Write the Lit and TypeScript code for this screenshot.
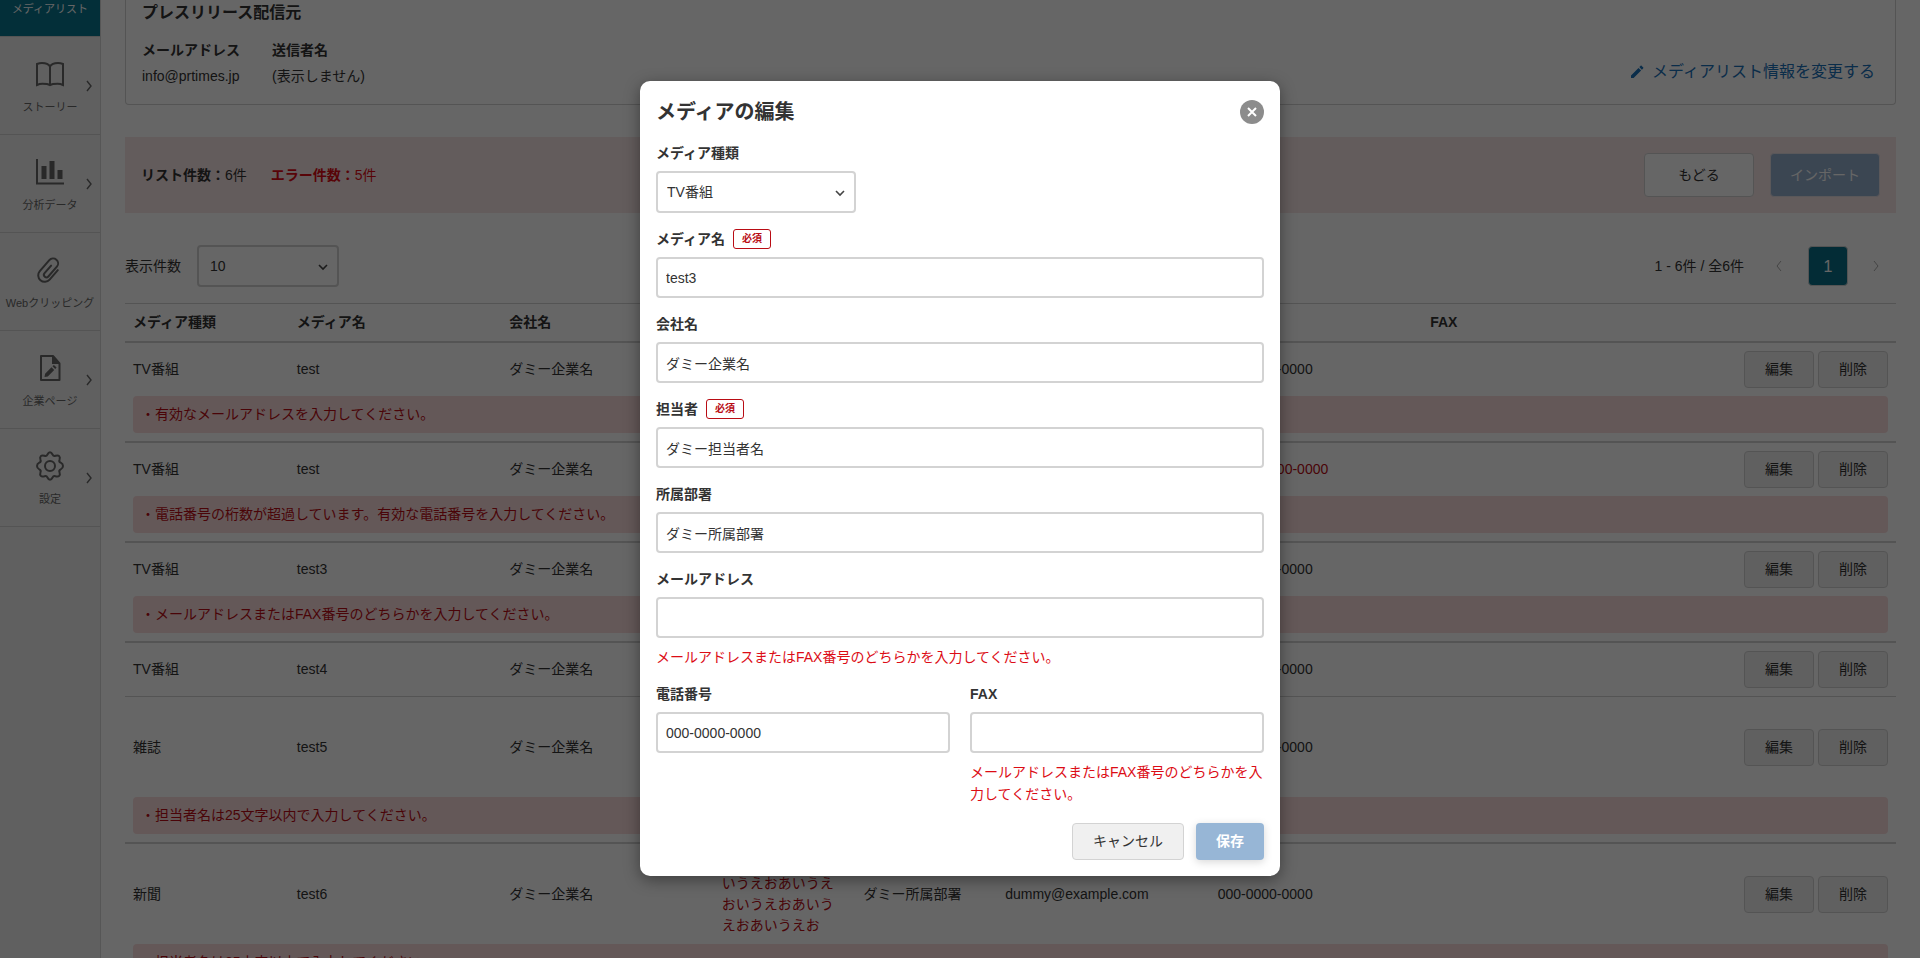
import { LitElement, html, css, svg, nothing } from "lit";
import { customElement } from "lit/decorators.js";

interface MediaRow {
  kind: string;
  name: string;
  company: string;
  person: string;
  longPerson?: boolean;
  dept: string;
  mail: string;
  tel: string;
  badTel?: boolean;
  error?: string;
}

const LONG_NAME = "えおあいうえおあいうえおあいうえおいうえおあいうえおあいうえお";

const ROWS: MediaRow[] = [
  { kind: "TV番組", name: "test", company: "ダミー企業名", person: "ダミー担当者", dept: "ダミー所属部署", mail: "dummy", tel: "000-0000-0000", error: "有効なメールアドレスを入力してください。" },
  { kind: "TV番組", name: "test", company: "ダミー企業名", person: "ダミー担当者", dept: "ダミー所属部署", mail: "dummy@example.com", tel: "00000-0000-0000", badTel: true, error: "電話番号の桁数が超過しています。有効な電話番号を入力してください。" },
  { kind: "TV番組", name: "test3", company: "ダミー企業名", person: "ダミー担当者", dept: "ダミー所属部署", mail: "", tel: "000-0000-0000", error: "メールアドレスまたはFAX番号のどちらかを入力してください。" },
  { kind: "TV番組", name: "test4", company: "ダミー企業名", person: "ダミー担当者", dept: "ダミー所属部署", mail: "dummy@example.com", tel: "000-0000-0000" },
  { kind: "雑誌", name: "test5", company: "ダミー企業名", person: LONG_NAME, longPerson: true, dept: "ダミー所属部署", mail: "dummy@example.com", tel: "000-0000-0000", error: "担当者名は25文字以内で入力してください。" },
  { kind: "新聞", name: "test6", company: "ダミー企業名", person: LONG_NAME, longPerson: true, dept: "ダミー所属部署", mail: "dummy@example.com", tel: "000-0000-0000", error: "担当者名は25文字以内で入力してください。" },
];

const HEADS = ["メディア種類", "メディア名", "会社名", "担当者", "所属部署", "メールアドレス", "電話番号", "FAX", ""];

const ICONS = {
  book: svg`<path d="M15 7.500C13.600 5 10.500 4 7 4 4.800 4 3 4.600 2 5v21c2-1 3.600-1.200 5.500-1.200 3.500 0 6 .4 7.500 1.200 1.500-.8 4-1.200 7.500-1.200 1.900 0 3.500.2 5.500 1.200V5c-1-.4-2.800-1-5-1-3.500 0-6.600 1-8 3.500zV26"/>`,
  chart: svg`<path d="M2 2v24.500h27"/><path class="solid" d="M6.500 9h5v13h-5zM14.500 4h5v18h-5zM22.500 13h5v9h-5z"/>`,
  clip: svg`<g transform="rotate(41 15 15)"><path d="M21 10v12.500a6.500 6.500 0 0 1-13 0V8a5 5 0 0 1 10 0v13a2.500 2.500 0 0 1-5 0V11" stroke-linecap="round"/></g>`,
  file: svg`<path d="M6.500 3h11.500l6.500 7.500V27h-18.500V3z" stroke-linejoin="round"/><path class="solid" d="M17 2.500V11h8zM9.500 24l.6-3.300 6.400-6.400 2.700 2.700-6.400 6.400zM17.500 13.300l1.400-1.400 2.700 2.700-1.400 1.400z"/>`,
  gear: svg`<circle cx="15" cy="15" r="5"/><path d="M15 1.300c1.600 0 2 1 2.600 2.300.6 1.400 1.400 1.800 2.900 1.200 1.500-.5 2.600-.8 3.700.3s.8 2.200.3 3.700c-.6 1.500-.2 2.300 1.200 2.900 1.300.6 2.300 1.500 2.300 3.300s-1 2.700-2.300 3.300c-1.400.6-1.800 1.400-1.200 2.900.5 1.500.8 2.600-.3 3.700s-2.200.8-3.700.3c-1.500-.6-2.300-.2-2.900 1.200-.6 1.300-1 2.300-2.600 2.300s-2-1-2.600-2.300c-.6-1.400-1.400-1.800-2.900-1.200-1.500.5-2.600.8-3.700-.3s-.8-2.200-.3-3.700c.6-1.500.2-2.300-1.200-2.900C3 17.700 2 16.800 2 15s1-2.700 2.300-3.300c1.400-.6 1.800-1.400 1.200-2.900-.5-1.500-.8-2.600.3-3.700s2.200-.8 3.700-.3c1.500.6 2.300.2 2.900-1.200C13 2.300 13.400 1.300 15 1.300z"/>`,
};

const MENU = [
  { icon: ICONS.book, text: "ストーリー", more: true },
  { icon: ICONS.chart, text: "分析データ", more: true },
  { icon: ICONS.clip, text: "Webクリッピング", more: false },
  { icon: ICONS.file, text: "企業ページ", more: true },
  { icon: ICONS.gear, text: "設定", more: true },
];

@customElement("app-root")
export class AppRoot extends LitElement {
  static styles = css`
    :host {
      display: block;
      position: relative;
      height: 100vh;
      overflow: hidden;
      background: #fff;
      color: #333;
      font: 14px/21px "Liberation Sans", "Noto Sans CJK JP", sans-serif;
    }
    *, *::before { box-sizing: border-box; }
    h1, h2, p, dl, dd { margin: 0; }
    button, input, select { font: inherit; color: inherit; margin: 0; }
    svg { display: block; fill: none; stroke: currentColor; }
    svg .solid { fill: currentColor; stroke: none; }

    .page { display: flex; min-height: 100%; }

    .side { flex: none; width: 101px; background: #f0f0f0; border-right: 1px solid #d8d8d8; }
    .item {
      display: grid;
      grid-template-columns: 1fr;
      justify-items: center;
      align-content: start;
      gap: 10px;
      position: relative;
      height: 98px;
      padding-top: 22px;
      border-bottom: 1px solid #d3d3d3;
      color: #666;
      font-size: 11px;
      line-height: 16px;
      text-decoration: none;
      white-space: nowrap;
    }
    .item.current { height: 37px; padding-top: 1px; background: #08758e; color: #fff; }
    .item .arrow { position: absolute; right: 8px; top: 43px; stroke-width: 1.4; }

    .main { flex: 1; min-width: 0; padding: 0 24px; }
    .card {
      display: flex;
      justify-content: space-between;
      align-items: flex-end;
      height: 105px;
      padding: 0 20px 17px 16px;
      border: 1px solid #d3d3d3;
      border-top: 0;
      border-radius: 0 0 4px 4px;
    }
    .card h2 { font-size: 16px; line-height: 24px; margin-bottom: 15px; }
    .sender { display: flex; gap: 32px; }
    .sender dt { font-weight: 700; margin-bottom: 5px; }
    .edit-link {
      display: flex;
      align-items: center;
      gap: 8px;
      margin-bottom: 3px;
      color: #1a70b8;
      font-size: 16px;
      line-height: 24px;
      text-decoration: none;
    }

    .summary {
      display: flex;
      align-items: center;
      gap: 16px;
      height: 76px;
      margin: 32px 0;
      padding: 0 16px;
      background: #f7e5e5;
    }
    .summary .bad { flex: 1; margin-left: 8px; color: #dc0c15; }
    .big { width: 110px; height: 44px; border: 1px solid #d3d3d3; border-radius: 4px; background: #fff; }
    .big.import { border-color: #e0dce2; background: #95aecd; color: #fff; }

    .tools { display: flex; align-items: center; gap: 16px; height: 42px; margin-bottom: 16px; }
    .picker { position: relative; width: 200px; }
    .picker.small { width: 142px; }
    .picker select {
      appearance: none;
      display: block;
      width: 100%;
      height: 42px;
      padding: 0 9px;
      border: 2px solid #d3d3d3;
      border-radius: 4px;
      background: #fff;
    }
    .picker.small select { padding: 0 11px; }
    .picker svg { position: absolute; right: 11px; top: 19px; pointer-events: none; stroke-width: 1.6; color: #444; }
    .pager { margin-left: auto; display: flex; align-items: center; }
    .pager button { display: grid; place-items: center; width: 40px; height: 40px; padding: 0; border: 0; background: none; color: #aaa; }
    .pager .range { margin-right: 15px; }
    .pager .on { margin: 0 8px 0 9px; border: 1px solid #d3d3d3; border-radius: 4px; background: #086f87; color: #fff; font-size: 16px; }

    table { width: 100%; table-layout: fixed; border-collapse: separate; border-spacing: 0; border-top: 1px solid #d3d3d3; }
    .c-kind { width: 9.25%; }
    .c-wide { width: 12%; }
    .c-mid { width: 8%; }
    th { height: 39px; padding: 0 8px; text-align: left; border-bottom: 2px solid #d3d3d3; }
    td { padding: 8px; overflow-wrap: anywhere; }
    td.line { border-bottom: 1px solid #d3d3d3; }
    td.note { padding-top: 0; border-bottom: 2px solid #d3d3d3; }
    .note p { padding: 8px; border-radius: 4px; background: #fadcdc; color: #b90c14; }
    .tight { display: flex; gap: 4px; justify-content: flex-end; }
    .red { color: #b90c14; }
    .btn {
      height: 37px;
      padding: 0 20px;
      border: 1px solid #d3d3d3;
      border-radius: 4px;
      background: #f0f0f0;
      white-space: nowrap;
    }

    .veil {
      position: absolute;
      inset: 0;
      display: grid;
      place-items: center;
      padding-bottom: 1px;
      background: rgba(0, 0, 0, 0.6);
    }
    .dialog {
      width: 640px;
      padding: 16px;
      border-radius: 10px;
      background: #fff;
      box-shadow: 0 4px 16px rgba(0, 0, 0, 0.4);
    }
    .head { display: flex; justify-content: space-between; align-items: center; margin-bottom: 16px; }
    .head h1 { font-size: 20px; line-height: 30px; }
    .close { display: grid; place-items: center; width: 24px; height: 24px; padding: 0; border: 0; border-radius: 50%; background: #8c8c8c; color: #fff; }
    form { display: grid; gap: 16px; }
    .pair { display: grid; grid-template-columns: 1fr 1fr; gap: 20px; align-items: start; }
    .lab { display: flex; align-items: center; gap: 8px; height: 20px; margin-bottom: 8px; font-weight: 700; }
    .must { padding: 0 8px; border: 1px solid #b90c14; border-radius: 3px; color: #b90c14; font-size: 10px; line-height: 18px; }
    .field input {
      display: block;
      width: 100%;
      height: 41px;
      padding: 0 8px;
      border: 2px solid #d3d3d3;
      border-radius: 4px;
      background: #fff;
    }
    .err { padding-top: 8px; color: #dc0c15; line-height: 22px; }
    .foot { display: flex; justify-content: flex-end; gap: 12px; padding-top: 2px; }
    .btn.save { border: 0; background: #97b6d6; color: #fff; font-weight: 700; box-shadow: 0 2px 8px rgba(0, 0, 0, 0.16); }
  `;

  private chevron(dir: "left" | "right" | "down", cls = "") {
    const d = { left: "M5 1 1 6l4 5", right: "M1 1l4 5-4 5", down: "M1 1l4 4 4-4" }[dir];
    const [w, h] = dir === "down" ? [10, 7] : [6, 12];
    return html`<svg class=${cls} width=${w} height=${h} viewBox="0 0 ${w} ${h}" aria-hidden="true"><path d=${d} /></svg>`;
  }

  private field(id: string, label: string, value: string, must = false, error = "") {
    return html`<div class="field">
      <label class="lab" for=${id}>${label}${must ? html`<span class="must">必須</span>` : nothing}</label>
      <input id=${id} type="text" .value=${value} />
      ${error ? html`<p class="err">${error}</p>` : nothing}
    </div>`;
  }

  private row(r: MediaRow) {
    const c = r.error ? "" : "line";
    return html`<tr>
        <td class=${c}>${r.kind}</td>
        <td class=${c}>${r.name}</td>
        <td class=${c}>${r.company}</td>
        <td class="${c} ${r.longPerson ? "red" : ""}">${r.person}</td>
        <td class=${c}>${r.dept}</td>
        <td class=${c}>${r.mail}</td>
        <td class="${c} ${r.badTel ? "red" : ""}">${r.tel}</td>
        <td class=${c}></td>
        <td class=${c}><div class="tight">
          <button class="btn" type="button">編集</button>
          <button class="btn" type="button">削除</button>
        </div></td>
      </tr>
      ${r.error ? html`<tr><td class="note" colspan="9"><p>・${r.error}</p></td></tr>` : nothing}`;
  }

  render() {
    return html`
      <div class="page">
        <nav class="side">
          <a class="item current" href="#">メディアリスト</a>
          ${MENU.map((m) => html`<a class="item" href="#">
            <svg width="30" height="30" viewBox="0 0 30 30" stroke-width="2" aria-hidden="true">${m.icon}</svg>
            ${m.text}${m.more ? this.chevron("right", "arrow") : nothing}
          </a>`)}
        </nav>
        <main class="main">
          <section class="card">
            <div>
              <h2>プレスリリース配信元</h2>
              <dl class="sender">
                <div><dt>メールアドレス</dt><dd>info@prtimes.jp</dd></div>
                <div><dt>送信者名</dt><dd>(表示しません)</dd></div>
              </dl>
            </div>
            <a class="edit-link" href="#">
              <svg width="14" height="14" viewBox="0 0 14 14" aria-hidden="true"><path class="solid" d="M1 13v-2.600l7.500-7.500 2.600 2.600L3.600 13zM9.300 2.100 10.500.9c.4-.4.8-.4 1.200 0l1.400 1.400c.4.4.4.8 0 1.200l-1.200 1.200z" /></svg>
              メディアリスト情報を変更する
            </a>
          </section>
          <section class="summary">
            <p><b>リスト件数：</b>6件</p>
            <p class="bad"><b>エラー件数：</b>5件</p>
            <button class="big" type="button">もどる</button>
            <button class="big import" type="button" disabled>インポート</button>
          </section>
          <div class="tools">
            <label for="per-page">表示件数</label>
            <div class="picker small">
              <select id="per-page"><option>10</option></select>
              ${this.chevron("down")}
            </div>
            <div class="pager">
              <span class="range">1 - 6件 / 全6件</span>
              <button type="button" aria-label="前へ">${this.chevron("left")}</button>
              <button class="on" type="button">1</button>
              <button type="button" aria-label="次へ">${this.chevron("right")}</button>
            </div>
          </div>
          <table>
            <colgroup>
              <col class="c-kind" /><col class="c-wide" /><col class="c-wide" /><col class="c-mid" /><col class="c-mid" />
              <col class="c-wide" /><col class="c-wide" /><col class="c-wide" /><col />
            </colgroup>
            <thead><tr>${HEADS.map((h) => html`<th>${h}</th>`)}</tr></thead>
            <tbody>${ROWS.map((r) => this.row(r))}</tbody>
          </table>
        </main>
      </div>
      <div class="veil">
        <section class="dialog" role="dialog" aria-modal="true" aria-labelledby="dialog-title">
          <header class="head">
            <h1 id="dialog-title">メディアの編集</h1>
            <button class="close" type="button" aria-label="閉じる">
              <svg width="10" height="10" viewBox="0 0 10 10" stroke-width="2" aria-hidden="true"><path d="M1 1l8 8M9 1 1 9" /></svg>
            </button>
          </header>
          <form>
            <div class="field">
              <label class="lab" for="kind">メディア種類</label>
              <div class="picker">
                <select id="kind"><option>TV番組</option></select>
                ${this.chevron("down")}
              </div>
            </div>
            ${this.field("name", "メディア名", "test3", true)}
            ${this.field("company", "会社名", "ダミー企業名")}
            ${this.field("person", "担当者", "ダミー担当者名", true)}
            ${this.field("dept", "所属部署", "ダミー所属部署")}
            ${this.field("mail", "メールアドレス", "", false, "メールアドレスまたはFAX番号のどちらかを入力してください。")}
            <div class="pair">
              ${this.field("tel", "電話番号", "000-0000-0000")}
              ${this.field("fax", "FAX", "", false, "メールアドレスまたはFAX番号のどちらかを入力してください。")}
            </div>
            <div class="foot">
              <button class="btn" type="button">キャンセル</button>
              <button class="btn save" type="button">保存</button>
            </div>
          </form>
        </section>
      </div>
    `;
  }
}
